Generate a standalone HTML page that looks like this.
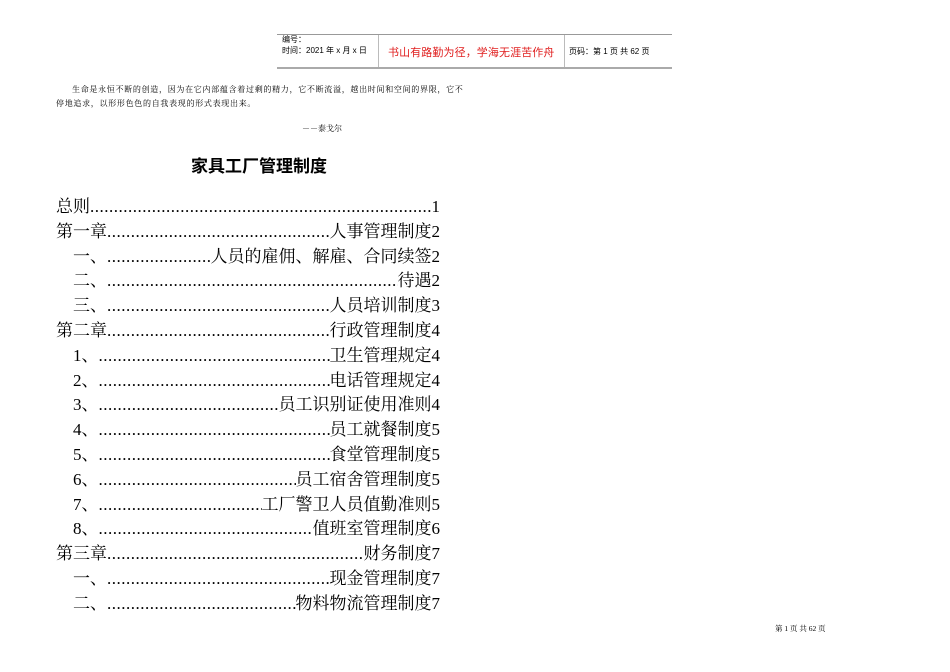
<!DOCTYPE html>
<html><head><meta charset="utf-8"><style>
body{margin:0;width:950px;height:672px;background:#fff;position:relative;overflow:hidden;font-family:"Liberation Serif","Noto Serif CJK SC",serif;color:#000}
.a{position:absolute;white-space:nowrap}
.s{font-family:"Liberation Sans","Noto Sans CJK SC",sans-serif}
.toc{position:absolute;right:510px;display:flex;font-size:17px;line-height:20px;height:20px}
.toc .d{flex:1;overflow:hidden;white-space:nowrap;letter-spacing:0.5px}
</style></head><body>
<div class="a" style="left:277px;top:34px;width:395px;height:1px;background:#999"></div>
<div class="a" style="left:277px;top:67px;width:395px;height:2px;background:#aaa"></div>
<div class="a" style="left:378px;top:35px;width:1px;height:32px;background:#bbb"></div>
<div class="a" style="left:564px;top:35px;width:1px;height:32px;background:#bbb"></div>
<div class="a s" style="left:282px;top:34px;font-size:8px;line-height:11px">编号：<br>时间：2021 年 x 月 x 日</div>
<div class="a s" style="left:388px;top:44px;font-size:11px;letter-spacing:0.1px;color:#e02020">书山有路勤为径，学海无涯苦作舟</div>
<div class="a s" style="left:569px;top:46px;font-size:8px">页码：第 1 页 共 62 页</div>
<div class="a" style="left:56px;top:83px;font-size:8px;line-height:14px;letter-spacing:0.7px;white-space:nowrap;text-indent:16px">生命是永恒不断的创造，因为在它内部蕴含着过剩的精力，它不断流溢，越出时间和空间的界限，它不<br>停地追求，以形形色色的自我表现的形式表现出来。</div>
<div class="a" style="left:302px;top:123px;font-size:8px">－－泰戈尔</div>
<div class="a s" style="left:191px;top:152px;font-size:17px;font-weight:bold">家具工厂管理制度</div>
<div id="t"></div>
<div class="a" style="left:775px;top:623px;font-size:7.5px">第 1 页 共 62 页</div>
<script>
var L=[["总则","1",56],["第一章","人事管理制度2",56],["一、","人员的雇佣、解雇、合同续签2",73],["二、","待遇2",73],["三、","人员培训制度3",73],["第二章","行政管理制度4",56],["1、","卫生管理规定4",73],["2、","电话管理规定4",73],["3、","员工识别证使用准则4",73],["4、","员工就餐制度5",73],["5、","食堂管理制度5",73],["6、","员工宿舍管理制度5",73],["7、","工厂警卫人员值勤准则5",73],["8、","值班室管理制度6",73],["第三章","财务制度7",56],["一、","现金管理制度7",73],["二、","物料物流管理制度7",73]];
var h="",dots=new Array(200).join(".");
L.forEach(function(r,i){h+='<div class="toc" style="left:'+r[2]+'px;top:'+(197+i*24.8)+'px"><span>'+r[0]+'</span><span class="d">'+dots+'</span><span>'+r[1]+'</span></div>';});
document.getElementById("t").innerHTML=h;
</script>
</body></html>
